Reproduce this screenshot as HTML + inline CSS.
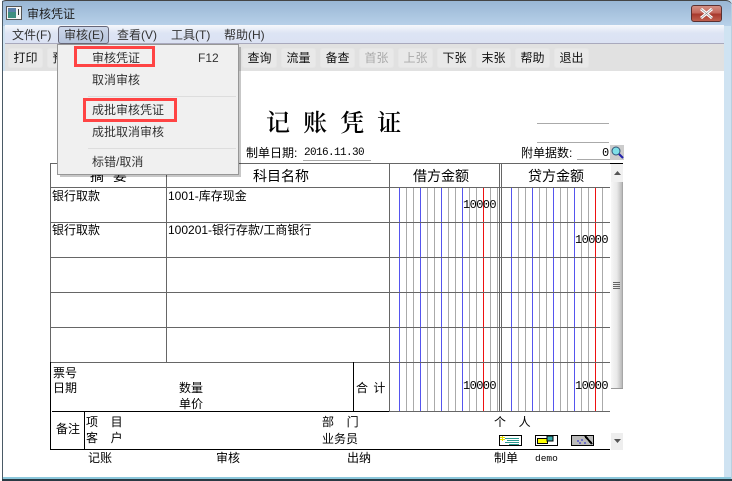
<!DOCTYPE html>
<html><head><meta charset="utf-8"><style>
html,body{margin:0;padding:0;background:#fff}
#w{position:relative;width:732px;height:481px;overflow:hidden;background:#fff;font-family:"Liberation Sans","WenQuanYi Zen Hei","Noto Sans CJK SC",sans-serif;font-size:12px;color:#000}
.t{position:absolute;white-space:pre;line-height:14px}
.a{position:absolute}
.b{position:absolute;top:48px;width:35px;height:20px;background:#e9e9e9;border:1px solid #e6e6e6;border-radius:3px;box-sizing:border-box;text-align:center;line-height:19px;color:#111;font-size:12px}
.dis{color:#aaa}
.m{position:absolute;color:#333;font-size:12px;line-height:14px;white-space:pre}
.h{font-size:14px;line-height:16px}
.mono{font-family:"Liberation Mono",monospace;font-size:12px;letter-spacing:-.6px}
.sp{word-spacing:3px}
.red{position:absolute;border:3px solid #f44;box-sizing:border-box}
</style></head><body><div id="w">
<div class="a" style="left:0;top:0;width:732px;height:481px;background:#cfe3f2"></div>
<div class="a" style="left:0;top:0;width:732px;height:26px;background:linear-gradient(#99b6d4,#b8d1e9);border-radius:6px 6px 0 0;border-top:1px solid #444;box-sizing:border-box"></div>
<div class="a" style="left:0;top:0;width:2px;height:481px;background:#fff"></div>
<div class="a" style="left:2px;top:1px;width:1px;height:479px;background:#4a5a66"></div>
<div class="a" style="left:731px;top:4px;width:1px;height:477px;background:#b9d0e0"></div>
<div class="a" style="left:2px;top:479px;width:730px;height:2px;background:#2a3a44"></div>
<div class="a" style="left:3px;top:477px;width:728px;height:2px;background:#8cc8dc"></div>
<!-- title icon -->
<svg class="a" style="left:6px;top:6px" width="16" height="14"><rect x=".5" y=".5" width="15" height="13" fill="#f4f4f4" stroke="#555"/><rect x="2" y="2" width="8" height="10" fill="#3f8f80"/><rect x="2" y="2" width="8" height="4" fill="#5a7fa8"/><rect x="12" y="3" width="1" height="6" fill="#333"/></svg>
<div class="t" style="left:27px;top:7px;color:#222">审核凭证</div>
<!-- close -->
<div class="a" style="left:691px;top:5px;width:31px;height:17px;border:1px solid #5a3030;border-radius:3px;box-sizing:border-box;background:linear-gradient(#d49084 0,#c4685c 45%,#a83a2e 55%,#c0604e 100%)"></div>
<svg class="a" style="left:699px;top:8px" width="15" height="11"><path d="M2 1L13 10M13 1L2 10" stroke="#fff" stroke-width="3"/><path d="M2 1L13 10M13 1L2 10" stroke="#888" stroke-width=".6"/></svg>
<!-- menu bar -->
<div class="a" style="left:5px;top:25px;width:719px;height:18px;background:linear-gradient(#f6f8fc,#dde4f4 45%,#dbe2f3)"></div>
<div class="a" style="left:5px;top:43px;width:719px;height:1px;background:#a9a9bd"></div>
<div class="t" style="left:12px;top:28px;color:#333">文件(F)</div>
<div class="a" style="left:58px;top:26px;width:51px;height:18px;border:1px solid #667;border-radius:3px;box-sizing:border-box;background:linear-gradient(#cdd7ea,#b6c4dc)"></div>
<div class="t" style="left:64px;top:28px;color:#333">审核(E)</div>
<div class="t" style="left:117px;top:28px;color:#333">查看(V)</div>
<div class="t" style="left:171px;top:28px;color:#333">工具(T)</div>
<div class="t" style="left:224px;top:28px;color:#333">帮助(H)</div>
<!-- toolbar -->
<div class="a" style="left:5px;top:44px;width:719px;height:27px;background:#e1e1e1"></div>
<div class="b" style="left:8px">打印</div>
<div class="b" style="left:47px">预览</div>
<div class="b" style="left:242px">查询</div>
<div class="b" style="left:281px">流量</div>
<div class="b" style="left:320px">备查</div>
<div class="b dis" style="left:359px">首张</div>
<div class="b dis" style="left:398px">上张</div>
<div class="b" style="left:437px">下张</div>
<div class="b" style="left:476px">末张</div>
<div class="b" style="left:515px">帮助</div>
<div class="b" style="left:554px">退出</div>
<!-- content -->
<div class="a" style="left:3px;top:71px;width:721px;height:406px;background:#fff"></div>
<svg class="a" style="left:0;top:0" width="732" height="481" shape-rendering="crispEdges">
<g stroke="#aaa" stroke-width="1"><path d="M406.5 187V411M413.5 187V411M427.5 187V411M434.5 187V411M448.5 187V411M455.5 187V411M469.5 187V411M476.5 187V411M490.5 187V411M497.5 187V411M518.5 187V411M525.5 187V411M539.5 187V411M546.5 187V411M560.5 187V411M567.5 187V411M581.5 187V411M588.5 187V411M602.5 187V411"/></g>
<g stroke="#5555ee"><path d="M399.5 187V411M420.5 187V411M441.5 187V411M462.5 187V411M511.5 187V411M532.5 187V411M553.5 187V411M574.5 187V411"/></g>
<g stroke="#ee1111"><path d="M483.5 187V411M595.5 187V411"/></g>
<g stroke="#666"><path d="M50.5 163.5H610M50.5 187.5H610M50.5 222.5H610M50.5 257.5H610M50.5 292.5H610M50.5 327.5H610M50.5 362.5H610M389 411.5H610M50.5 163V411M166.5 163V362M389.5 163V411M499.5 163V411M501.5 163V411"/></g>
<g stroke="#000"><path d="M52 411.5H389M50 449.5H610M50.5 362V450M84.5 411V449M353.5 362V411M610 163.500H623"/></g>
<g stroke="#aaa"><path d="M537 123.5H609M537 142.5H609M303 160.5H371M577 159.5H610"/></g>
</svg>
<div class="t" style="left:266px;top:107px;font-size:24px;line-height:28px;word-spacing:7px;font-weight:600;font-family:'Noto Serif CJK SC','WenQuanYi Zen Hei',serif">记 账 凭 证</div>
<div class="t" style="left:246px;top:146px">制单日期:</div>
<div class="t mono" style="left:304px;top:146px;font-size:11px;letter-spacing:-.6px">2016.11.30</div>
<div class="t" style="left:521px;top:146px">附单据数:</div>
<div class="t mono" style="left:602px;top:146px;letter-spacing:0">0</div>
<svg class="a" style="left:610px;top:145px" width="14" height="15"><rect width="14" height="15" fill="#ccc"/><circle cx="6" cy="6" r="4" fill="#7fe0e8" stroke="#357"/><path d="M9 9L13 13" stroke="#22a" stroke-width="2"/></svg>
<div class="t h" style="left:90px;top:168px;word-spacing:5px">摘 要</div>
<div class="t h" style="left:253px;top:168px">科目名称</div>
<div class="t h" style="left:413px;top:168px">借方金额</div>
<div class="t h" style="left:528px;top:168px">贷方金额</div>
<div class="t" style="left:52px;top:189px">银行取款</div>
<div class="t" style="left:168px;top:189px">1001-库存现金</div>
<div class="t mono" style="left:463px;top:198px">10000</div>
<div class="t" style="left:52px;top:223px">银行取款</div>
<div class="t" style="left:168px;top:223px">100201-银行存款/工商银行</div>
<div class="t mono" style="left:575px;top:233px">10000</div>
<div class="t" style="left:53px;top:366px">票号</div>
<div class="t" style="left:53px;top:381px">日期</div>
<div class="t" style="left:179px;top:381px">数量</div>
<div class="t" style="left:179px;top:397px">单价</div>
<div class="t" style="left:356px;top:381px;word-spacing:2px">合 计</div>
<div class="t mono" style="left:463px;top:379px">10000</div>
<div class="t mono" style="left:575px;top:379px">10000</div>
<div class="t" style="left:56px;top:422px">备注</div>
<div class="t sp" style="left:86px;top:415px">项  目</div>
<div class="t sp" style="left:86px;top:431px">客  户</div>
<div class="t sp" style="left:322px;top:415px">部  门</div>
<div class="t" style="left:322px;top:432px">业务员</div>
<div class="t sp" style="left:494px;top:415px">个  人</div>
<div class="t" style="left:88px;top:451px">记账</div>
<div class="t" style="left:216px;top:451px">审核</div>
<div class="t" style="left:347px;top:451px">出纳</div>
<div class="t" style="left:494px;top:451px">制单</div>
<div class="t mono" style="left:535px;top:452px;font-size:9.5px;letter-spacing:0">demo</div>
<svg class="a" style="left:499px;top:435px" width="96" height="12" shape-rendering="crispEdges">
<rect x=".5" y=".5" width="22" height="10" fill="#fff" stroke="#000"/><path d="M6 3.500H20M8 5.500H20M6 7.500H20M10 9.500H20" stroke="#2a9a90"/><path d="M1 2h5v1H1zM3 1h1v5H3zM1 4h5v1H1z" fill="#e8e000"/>
<rect x="36.5" y=".5" width="22" height="10" fill="#fff" stroke="#000"/><rect x="38.500" y="3.500" width="10" height="5" fill="#ff0" stroke="#000"/><rect x="48" y="1" width="6" height="5" fill="#3aa" stroke="#000"/>
<rect x="72.5" y=".5" width="22" height="10" fill="#bbb" stroke="#000"/><path d="M78 6h2M82 5h2M85 8h2M80 8h2" stroke="#22c"/><path d="M86 1L93 9" stroke="#000" stroke-width="2"/>
</svg>
<!-- scrollbar -->
<div class="a" style="left:611px;top:164px;width:12px;height:285px;background:#fff"></div>
<div class="a" style="left:611px;top:164px;width:12px;height:18px;background:#f1f1f1"></div>
<svg class="a" style="left:613px;top:170px" width="9" height="6"><path d="M1 5L4.500 1L8 5Z" fill="#555"/></svg>
<div class="a" style="left:611px;top:182px;width:12px;height:207px;background:linear-gradient(90deg,#f7f7f7,#e8e8e8 50%,#bbb 90%,#999);border-bottom:1px solid #999;box-sizing:border-box"></div>
<svg class="a" style="left:612px;top:281px" width="9" height="9" shape-rendering="crispEdges"><path d="M1 1.500H8M1 3.500H8M1 5.500H8M1 7.500H8" stroke="#666"/></svg>
<div class="a" style="left:611px;top:433px;width:12px;height:17px;background:#eee"></div>
<svg class="a" style="left:613px;top:438px" width="9" height="6"><path d="M1 1L4.500 5L8 1Z" fill="#555"/></svg>
<!-- dropdown -->
<div class="a" style="left:60px;top:47px;width:181px;height:130px;background:rgba(0,0,0,.22)"></div>
<div class="a" style="left:57px;top:44px;width:182px;height:131px;background:#f0f0f0;border:1px solid #979797;box-sizing:border-box"></div>
<div class="a" style="left:88px;top:96px;width:148px;height:1px;background:#ddd"></div>
<div class="a" style="left:88px;top:148px;width:148px;height:1px;background:#ddd"></div>
<div class="m" style="left:92px;top:51px">审核凭证</div>
<div class="m" style="left:198px;top:51px">F12</div>
<div class="m" style="left:92px;top:73px">取消审核</div>
<div class="m" style="left:92px;top:103px">成批审核凭证</div>
<div class="m" style="left:92px;top:125px">成批取消审核</div>
<div class="m" style="left:92px;top:155px">标错/取消</div>
<div class="red" style="left:74px;top:46px;width:81px;height:21px"></div>
<div class="red" style="left:83px;top:98px;width:94px;height:24px"></div>
</div></body></html>
